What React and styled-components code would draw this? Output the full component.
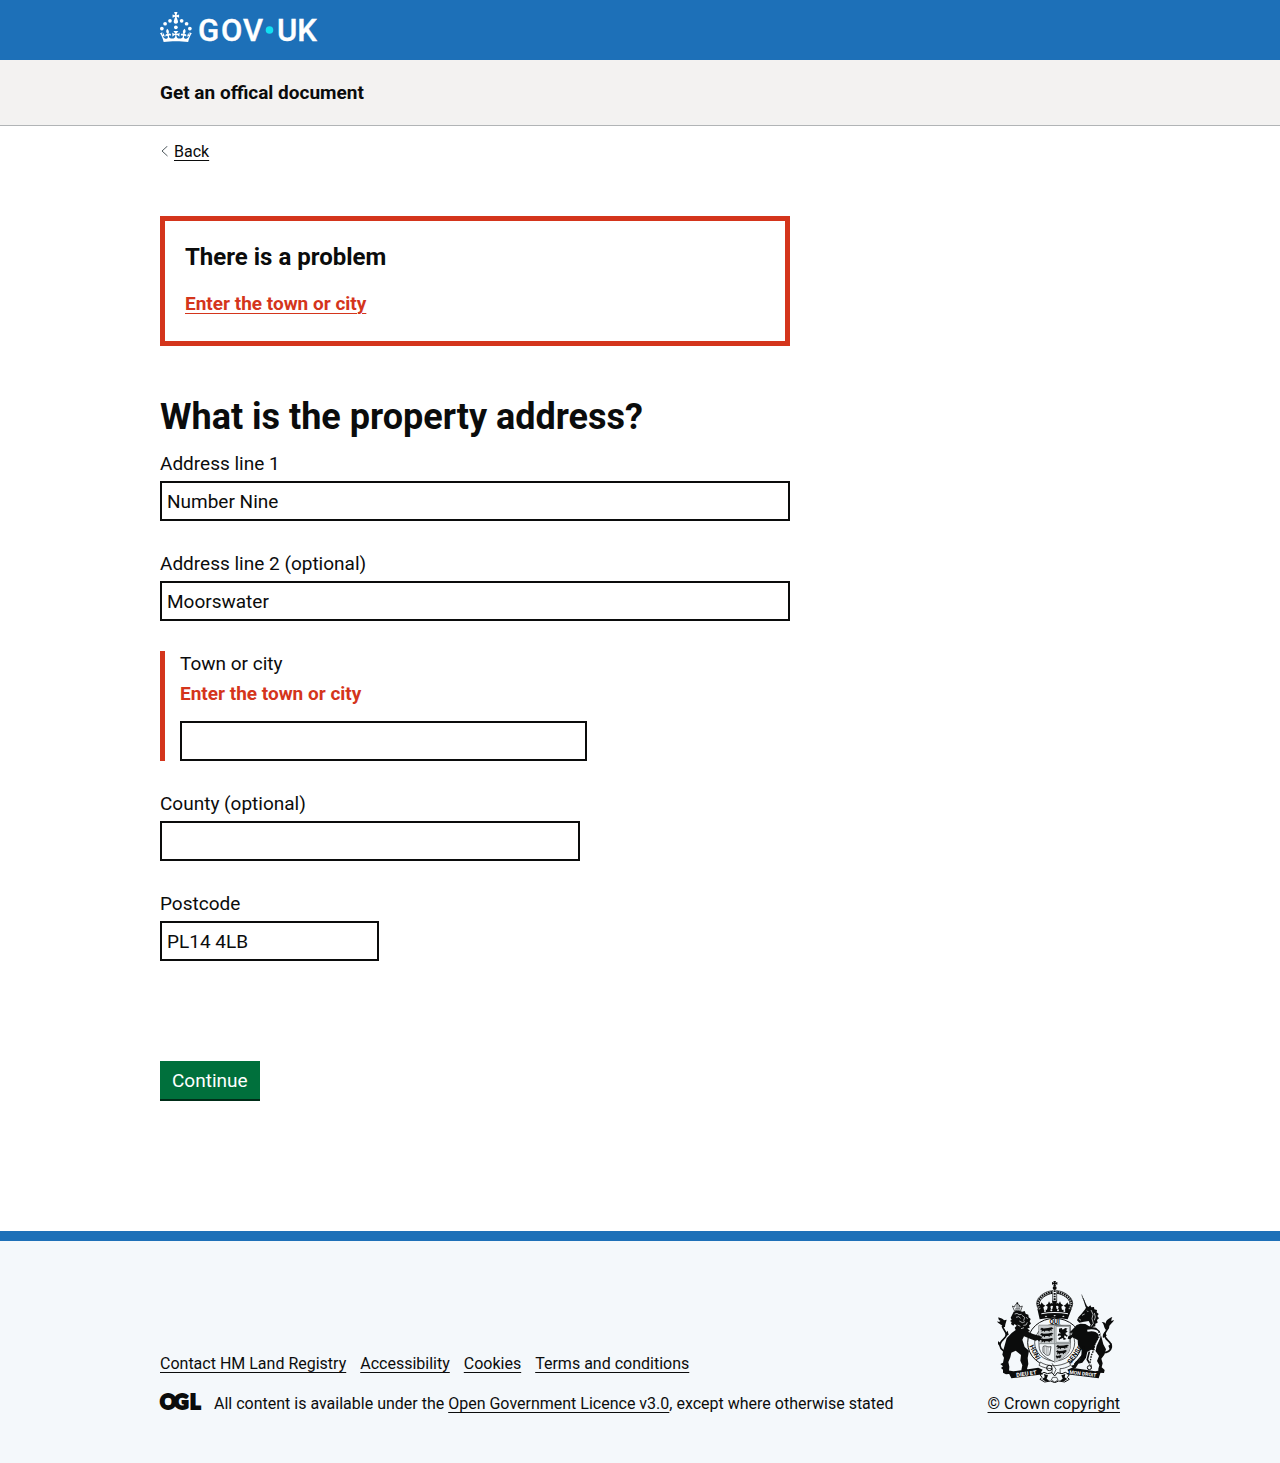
import React from "react";
import styled, { createGlobalStyle, css } from "styled-components";

const color = {
  text: "#0b0c0c",
  brand: "#1d70b8",
  accent: "#11e0f1",
  error: "#d4351c",
  button: "#00703c",
  buttonShadow: "#002d18",
  navigation: "#f3f2f1",
  border: "#b1b4b6",
  secondary: "#505a5f",
  footer: "#f4f8fb",
};

const GlobalStyle = createGlobalStyle`
  *, *::before, *::after { box-sizing: border-box; }
  body {
    margin: 0;
    background: ${color.footer};
    color: ${color.text};
    font-family: Roboto, "Liberation Sans", Arial, sans-serif;
    font-size: 19px;
    line-height: 25px;
  }
`;

const Page = styled.div`
  background: #fff;
`;

const Container = styled.div`
  max-width: 960px;
  margin: 0 auto;

  @media (max-width: 1020px) {
    margin: 0 30px;
  }
`;

const linkStyle = css`
  color: ${(p) => (p.$error ? color.error : color.text)};
  text-decoration: underline;
  text-decoration-thickness: 1px;
  text-underline-offset: 3px;
`;

const Link = styled.a`
  ${linkStyle}
  font-weight: ${(p) => (p.$error ? 700 : 400)};
`;

const Header = styled.header`
  background: ${color.brand};
  color: #fff;
  padding: 12px 0 18px;
`;

const HomeLink = styled.a`
  display: inline-block;
  vertical-align: top;
  height: 30px;
  color: #fff;
`;

const Logotype = styled.svg`
  display: block;
  fill: currentColor;
  overflow: visible;
`;

const LogoText = styled.text`
  font-family: Roboto, sans-serif;
  font-size: 31px;
  font-weight: 500;
  stroke: currentColor;
  stroke-width: 0.4;
`;

const ServiceNavigation = styled.section`
  background: ${color.navigation};
  border-bottom: 1px solid ${color.border};
  padding: 20px 0;
`;

const ServiceName = styled.a`
  display: block;
  color: ${color.text};
  font-weight: 700;
  text-decoration: none;
`;

const BackLink = styled.a`
  ${linkStyle}
  display: inline-flex;
  align-items: center;
  gap: 5px;
  margin-top: 16px;
  font-size: 16px;
  line-height: 20px;
  vertical-align: top;
`;

const Chevron = styled.svg`
  stroke: ${color.secondary};
  fill: none;
`;

const Main = styled.main`
  display: flex;
  flex-direction: column;
  align-items: flex-start;
  max-width: 630px;
  padding: 54px 0 130px;
`;

const ErrorSummary = styled.section`
  width: 100%;
  border: 5px solid ${color.error};
  padding: 20px 20px 25px;
  margin-bottom: 50px;
`;

const SummaryTitle = styled.h2`
  margin: 0 0 18px;
  font-size: 24px;
  line-height: 32px;
`;

const SummaryList = styled.ul`
  margin: 0;
  padding: 0;
  list-style: none;
`;

const Form = styled.form`
  width: 100%;
`;

const Fieldset = styled.fieldset`
  min-width: 0;
  margin: 0 0 100px;
  padding: 0;
  border: 0;
`;

const Legend = styled.legend`
  padding: 0;
  margin-bottom: 13px;
`;

const Title = styled.h1`
  margin: 0;
  font-size: 36px;
  line-height: 42px;
`;

const Fields = styled.div`
  display: flex;
  flex-direction: column;
  gap: 30px;
`;

const FormGroup = styled.div`
  ${(p) =>
    p.$error &&
    css`
      border-left: 5px solid ${color.error};
      padding-left: 15px;
    `}
`;

const Label = styled.label`
  display: block;
  margin-bottom: 5px;
`;

const ErrorMessage = styled.p`
  margin: 0 0 15px;
  color: ${color.error};
  font-weight: 700;
`;

const widths = { full: "100%", twoThirds: "calc(100% * 2 / 3)", short: "219px" };

const Input = styled.input`
  display: block;
  width: ${(p) => widths[p.$width]};
  max-width: 100%;
  height: 40px;
  padding: 5px;
  border: 2px solid ${color.text};
  border-radius: 0;
  background: #fff;
  color: ${color.text};
  font: inherit;
`;

const Button = styled.button`
  display: block;
  height: 38px;
  margin: 0 0 2px;
  padding: 0 12px;
  border: 0;
  background: ${color.button};
  box-shadow: 0 2px 0 ${color.buttonShadow};
  color: #fff;
  font: inherit;
  cursor: pointer;
`;

const Footer = styled.footer`
  border-top: 10px solid ${color.brand};
  background: ${color.footer};
  padding: 40px 0 49px;
  font-size: 16px;
  line-height: 20px;
`;

const FooterRow = styled.div`
  display: flex;
  flex-wrap: wrap;
  align-items: flex-end;
  justify-content: space-between;
  gap: 30px;
`;

const FooterLinks = styled.ul`
  display: flex;
  flex-wrap: wrap;
  gap: 14px;
  margin: 0 0 20px;
  padding: 0;
  list-style: none;
`;

const Licence = styled.div`
  display: flex;
  align-items: flex-start;
  gap: 12px;
`;

const LicenceLogo = styled.svg`
  flex: none;
  fill: ${color.text};
  overflow: visible;
`;

const LicenceText = styled.text`
  font-family: Lato, sans-serif;
  font-size: 20px;
  font-weight: 900;
  stroke: ${color.text};
  stroke-width: 2;
`;

const Copyright = styled.a`
  ${linkStyle}
  display: flex;
  flex-direction: column;
  align-items: center;
  gap: 11px;
`;

const ArmsText = styled.text`
  font-family: Roboto, sans-serif;
  font-size: ${(p) => p.$size}px;
  font-weight: 700;
  fill: ${(p) => (p.$light ? "#fff" : color.text)};
  text-anchor: middle;
`;

function GovLogo() {
  return (
    <Logotype width="162" height="30" viewBox="0 0 162 30" role="img" aria-label="GOV.UK">
      <g transform="scale(0.5)">
        <circle cx="20" cy="17.6" r="3.7" />
        <circle cx="10.2" cy="23.5" r="3.7" />
        <circle cx="3.7" cy="33.2" r="3.7" />
        <circle cx="31.7" cy="30.6" r="3.7" />
        <circle cx="43.3" cy="17.6" r="3.7" />
        <circle cx="53.2" cy="23.5" r="3.7" />
        <circle cx="59.7" cy="33.2" r="3.7" />
        <path d="M33.1,9.8c.2-.1.3-.3.5-.5l4.6,2.4v-6.8l-4.6,1.5c-.1-.2-.3-.3-.5-.5l1.9-5.9h-6.7l1.9,5.9c-.2.1-.3.3-.5.5l-4.6-1.5v6.8l4.6-2.4c.1.2.3.3.5.5l-2.6,8c-.9,2.8,1.2,5.7,4.1,5.7h0c3,0,5.1-2.9,4.1-5.7l-2.6-8ZM37,37.9s-3.4,3.8-4.1,6.1c2.2,0,4.2-.5,6.4-2.8l-.7,8.5c-2-2.8-4.4-4.1-5.7-3.8.1,3.1.5,6.7,5.8,7.2,3.7.3,6.7-1.5,7-3.8.4-2.6-2-4.3-3.7-1.6-1.4-4.5,2.4-6.1,4.9-3.2-1.9-4.5-1.8-7.7,2.4-10.9,3,4,2.6,7.3-1.2,11.1,2.4-1.3,6.2,0,4,4.6-1.2-2.8-3.7-2.2-4.2.2-.3,1.7.7,3.7,3,4.2,1.9.3,4.7-.9,7-5.9-1.3,0-2.4.7-3.9,1.7l2.4-8c.6,2.3,1.4,3.7,2.2,4.5.6-1.6.5-2.8,0-5.3l5,1.8c-2.6,3.6-5.2,8.7-7.3,17.5-7.4-1.1-15.7-1.7-24.5-1.7h0c-8.8,0-17.1.6-24.5,1.7-2.1-8.9-4.7-13.9-7.3-17.5l5-1.8c-.5,2.5-.6,3.7,0,5.3.8-.8,1.6-2.3,2.2-4.5l2.4,8c-1.5-1-2.6-1.7-3.9-1.7,2.3,5,5.2,6.2,7,5.9,2.3-.4,3.3-2.4,3-4.2-.5-2.4-3-3.1-4.2-.2-2.2-4.6,1.6-6,4-4.6-3.7-3.7-4.2-7.1-1.2-11.1,4.2,3.2,4.3,6.4,2.4,10.9,2.5-2.8,6.3-1.3,4.9,3.2-1.8-2.7-4.1-1-3.7,1.6.3,2.3,3.3,4.1,7,3.8,5.4-.5,5.7-4.2,5.8-7.2-1.3-.2-3.7,1-5.7,3.8l-.7-8.5c2.2,2.3,4.2,2.7,6.4,2.8-.7-2.3-4.1-6.1-4.1-6.1h10.6,0Z" />
      </g>
      <LogoText x="38 61 83" y="29">GOV</LogoText>
      <circle cx="109.5" cy="18" r="3.8" fill={color.accent} />
      <LogoText x="117" y="29">UK</LogoText>
    </Logotype>
  );
}

const lionPassant =
  "M0 5l4-4 4 2 10-1 8-2 4 3-5 3 2 3-5-1-1 4-3-3-6 0-2 4-2-4-5 3 1-5z";

function RoyalArms() {
  const ink = color.text;
  return (
    <svg width="126" height="102" viewBox="-1 9 378 306" fill={ink} stroke="none" aria-hidden="true">
      {/* crown */}
      <path d="M186 9h8l-2 5 6-2v8l-6-2 2 6h-8l2-6-6 2v-8l6 2z" />
      <circle cx="190" cy="30" r="6" />
      <g fill="none" stroke={ink}>
        <path d="M183 38C163 39 136 56 136 76c0 12 8 20 11 28M197 38c20 1 47 18 47 38 0 12-8 20-11 28" strokeWidth="2" />
        <path d="M183 46c-16 2-38 15-39 30 0 8 5 12 8 20M197 46c16 2 38 15 39 30 0 8-5 12-8 20" strokeWidth="3" />
        <path d="M182 42c-17 2-41 15-43 34 0 11 7 16 10 24M198 42c17 2 41 15 43 34 0 11-7 16-10 24" strokeWidth="6" strokeDasharray="5 2" />
        <path d="M184 36v48M196 36v48" strokeWidth="2" />
        <path d="M190 37v48" strokeWidth="6" strokeDasharray="5 3" />
      </g>
      <path d="M138 92l10 5-1-10-6-4 7-4 3-6 4 6 7 4-6 5 2 8 9-1 2-9-6-4 7-5 3-7 4 7 6 5-6 4 2 7h4l2-9-7-3v-7l7 3-3-9h15l-3 9 7-3v7l-7 3 2 9h4l2-7-6-4 6-5 4-7 3 7 7 5-6 4 2 9 9 1 2-8-6-5 7-4 4-6 3 6 7 4-6 4-1 10 10-5-12 32q-42-9-84 0z" />
      <g fill={color.footer}>
        <circle cx="161" cy="99" r="3" />
        <circle cx="180" cy="97" r="3" />
        <circle cx="200" cy="97" r="3" />
        <circle cx="219" cy="99" r="3" />
        <path d="M150 106q40-8 80 0v3q-40-8-80 0z" />
        <path d="M160 115l4-2 4 2-4 2zM186 113l4-2 4 2-4 2zM212 115l4-2 4 2-4 2z" />
      </g>

      {/* garter */}
      <g fill="none" stroke={ink}>
        <ellipse cx="190" cy="194" rx="81" ry="73" strokeWidth="3" />
        <ellipse cx="190" cy="194" rx="60" ry="55" strokeWidth="2" />
      </g>
      <ArmsText $size="19" x="190" y="138">QUI</ArmsText>
      <ArmsText $size="20" transform="translate(125 226) rotate(62)">HONI</ArmsText>
      <ArmsText $size="20" transform="translate(256 234) rotate(-54)">SENSE</ArmsText>

      {/* shield */}
      <path d="M143 142h94v60c0 28-24 40-47 50-23-10-47-22-47-50z" fill={color.footer} stroke={ink} strokeWidth="2" />
      <path d="M143 142h46v54h-46z" fill="#c5c9cb" />
      <path d="M191 196h46v6c0 28-24 40-46 50z" fill="#c5c9cb" />
      {[148, 164, 180].map((y) => (
        <path key={y} d={lionPassant} transform={`translate(146 ${y}) scale(1.35 1.1)`} />
      ))}
      <path d={lionPassant} transform="translate(194 200) scale(1.3 1.1)" />
      <path d={lionPassant} transform="translate(194 216) scale(1.1 1.1)" />
      <path d={lionPassant} transform="translate(193 231) scale(.6 .9)" />
      <g fill="none" stroke="#8d9294" strokeWidth="3">
        <rect x="194" y="145" width="40" height="48" />
        <path d="M190 142v108M143 197h94" />
      </g>
      <path d="M203 152l8-2 3 5 8-5 7 2-5 4 5 5-7 4 3 5 4 1-2 6-7-5-2 6 7 5-8 3-2-6-8 3-4 4-2-6 8-5-2-4-8 2 2-7 8-1-6-4z" />
      <g fill="none" stroke={ink} strokeWidth="2">
        <path d="M155 206c8-6 12 3 24 0l-4 24c-7 5-13 0-20-8z" />
        <path d="M160 206v20M165 206v22M170 207v23" strokeWidth="1" />
      </g>

      {/* buckle, strap and compartment */}
      <path d="M147 252c20 14 55 16 86-1l5 11c-14 8-24 10-32 10l1 18-14 9-12-9 2-18c-14 0-30-4-40-10z" fill={color.footer} stroke={ink} strokeWidth="2" />
      <circle cx="174" cy="270" r="8" fill="none" stroke={ink} strokeWidth="3" />
      <path d="M182 256l12 18M194 274l-6 14" fill="none" stroke={ink} strokeWidth="2" />
      <g fill={color.footer} stroke={ink} strokeWidth="3">
        <path d="M146 290l12-7 10 4 14-3 8 10 8-10 14 3 10-4 12 7-6 8 6 6-14 8-18-3-12 5-12-5-18 3-14-8 6-6z" />
      </g>
      <path d="M158 288l12 4-4 10 8 6-12 2-10-7 8-5zM222 288l-12 4 4 10-8 6 12 2 10-7-8-5z" />
      <path d="M184 298h12l4 8-10 6-10-6z" fill={color.footer} stroke={ink} strokeWidth="2" />

      {/* lion */}
      <g>
        <path d="M69 98l-6-14 7 3 1-6 6-4 7 4 2 6 7-3-5 15q-9-3-19-1z" fill={color.footer} stroke={ink} strokeWidth="2" />
        <path d="M71 93h16M77 80v12M83 81v11" stroke={ink} strokeWidth="2" />
        <circle cx="78" cy="76" r="3" />
        <path d="M67 101c8-4 17-3 26 0l7-2 3 8 8 3 1 8 6 5-3 7 4 7-6 5 2 8-7 1 8 8-6 2 15 7 13 4 8 1 7 6-5 2 6 6-8-1-2 5-5-5-7 2-14-5-20-8-5 10 7 22 13 11-4 22 2 18-4 15 7 9-19 1-5-6 3-15-6-14 2-17-16-13-13 6-3 14-6 14 3 14-1 14 8 7-17 2-9-5 0-9-6-5 6-5-8-7 8-4 3-15-5-9 3-13 5-18 5-18 15-16 12-9-3-7 6-6-6-5-4 5-7-5 2-6-5-3 5-4-3-6z" />
        <path d="M70 108l7-2 6 4 8-1M74 118l8-2 6 5M92 112l8 6-3 10M84 129l9 5 8-3M96 142l8-1 4-8M79 141l8 4M104 118l5 4M89 152l9-3" fill="none" stroke={color.footer} strokeWidth="2" />
        <path d="M56 222c-15 2-28-5-30-19-2-16 19-20 19-33 0-9-10-15-12-26" fill="none" stroke={ink} strokeWidth="5" />
        <path d="M35 148c-3-10-14-9-18-18 7 3 9 1 10-2-5-1-6-5-6-10 8 4 14 4 17 9l8-2c-2 8-5 14-5 22zM26 204c-7-3-7-9-5-15 3 5 6 5 9 6zM44 175c-2-7-1-12 5-17l3 12z" />
      </g>

      {/* unicorn */}
      <g>
        <path d="M271 50l17 36-5 2z" />
        <path d="M271 50l5 14M276 62l4 8" stroke={ink} strokeWidth="2" strokeDasharray="3 2" />
        <path d="M282 93l4-10 5 4 6-5 3 6 8-1 1 7 8 2-1 7 6 5-4 6 5 7-6 5 2 8-7 3 0 8-8 2-4 8-12 1 10-16-6-11-14 2-14 3-7-7 4-9 9-10z" />
        <path d="M262 122l7 5M272 112l8-4M287 98l4 4M299 96l6 13-3 13 4 14-7 10M309 105l3 12-3 10" fill="none" stroke={color.footer} strokeWidth="2" />
        <path d="M247 151l9-10 11-4 15 1 14 8 18 3 11 10 6 20 5 20 8 15-5 16-9 12 4 14-3 12 9 8-2 9-17-1 0-12 3-10-7-13 6-15-10-14-13-5-12 6-4 18-11 15-12 3-8 13-8 1-6-8 8-2 7-11 11-4 5-13 1-17-11-15-1-15-16-8-6 6-8-2 2-7 9-4 4-7-10 0z" />
        <path d="M277 206l-3 25-24 28M294 221l-6 24 10 16 1 11" fill="none" stroke={ink} strokeWidth="5" />
        <path d="M288 158c21-4 35 2 37 14 1 15-15 24-14 42l-9 20-6 28" fill="none" stroke={color.footer} strokeWidth="6" />
        <path d="M322 160c2 6 3 13 0 18-7 10-14 21-13 34l-9 20-5 28" fill="none" stroke={ink} strokeWidth="4" strokeDasharray="5 3" />
        <circle cx="294" cy="269" r="6" fill={color.footer} stroke={ink} strokeWidth="3" />
        <path d="M334 224c13 0 24-6 26-17 2-17-20-20-20-36 0-10 10-16 12-26" fill="none" stroke={ink} strokeWidth="5" />
        <path d="M344 156c-7-7-5-18-13-24 7-1 9 2 12 5 0-9 8-16 20-20-3 6-3 9-3 12l8-3c-3 9-14 12-17 26zM356 216c7-7 6-15 4-21-3 5-6 7-9 8zM335 180c-2-8 0-14 6-19l5 12z" />
      </g>

      {/* motto scroll */}
      <path d="M48 277l18 3 75-11 13 6-5 8 7 6-96 12z" />
      <path d="M330 277l-18 3-70-11-14 6 5 8-7 6 96 12z" />
      <ArmsText $size="17" $light transform="translate(106 293) rotate(-7)">DIEU ET</ArmsText>
      <ArmsText $size="15" $light transform="translate(274 292) rotate(7)">MON DROIT</ArmsText>
    </svg>
  );
}

function Field({ id, label, error, width, ...input }) {
  return (
    <FormGroup $error={Boolean(error)}>
      <Label htmlFor={id}>{label}</Label>
      {error && <ErrorMessage id={`${id}-error`}>{error}</ErrorMessage>}
      <Input
        id={id}
        name={id}
        type="text"
        $width={width}
        aria-describedby={error ? `${id}-error` : undefined}
        {...input}
      />
    </FormGroup>
  );
}

const footerLinks = ["Contact HM Land Registry", "Accessibility", "Cookies", "Terms and conditions"];

export default function App() {
  return (
    <>
      <GlobalStyle />
      <Page>
        <Header>
          <Container>
            <HomeLink href="#">
              <GovLogo />
            </HomeLink>
          </Container>
        </Header>
        <ServiceNavigation>
          <Container>
            <ServiceName href="#">Get an offical document</ServiceName>
          </Container>
        </ServiceNavigation>
        <Container>
          <BackLink href="#">
            <Chevron width="9" height="12" viewBox="0 0 9 12" aria-hidden="true">
              <path d="M7.5 0L2 5l5.5 5" />
            </Chevron>
            Back
          </BackLink>
          <Main>
            <ErrorSummary aria-labelledby="error-summary-title">
              <SummaryTitle id="error-summary-title">There is a problem</SummaryTitle>
              <SummaryList>
                <li>
                  <Link href="#town" $error>
                    Enter the town or city
                  </Link>
                </li>
              </SummaryList>
            </ErrorSummary>
            <Form onSubmit={(e) => e.preventDefault()} noValidate>
              <Fieldset>
                <Legend>
                  <Title>What is the property address?</Title>
                </Legend>
                <Fields>
                  <Field id="line1" label="Address line 1" width="full" defaultValue="Number Nine" />
                  <Field id="line2" label="Address line 2 (optional)" width="full" defaultValue="Moorswater" />
                  <Field id="town" label="Town or city" width="twoThirds" error="Enter the town or city" />
                  <Field id="county" label="County (optional)" width="twoThirds" />
                  <Field id="postcode" label="Postcode" width="short" defaultValue="PL14 4LB" />
                </Fields>
              </Fieldset>
              <Button type="submit">Continue</Button>
            </Form>
          </Main>
        </Container>
        <Footer>
          <Container>
            <FooterRow>
              <div>
                <FooterLinks>
                  {footerLinks.map((text) => (
                    <li key={text}>
                      <Link href="#">{text}</Link>
                    </li>
                  ))}
                </FooterLinks>
                <Licence>
                  <LicenceLogo width="42" height="20" viewBox="0 0 42 20" role="img" aria-label="OGL">
                    <LicenceText x="0 14 30" y="15">OGL</LicenceText>
                  </LicenceLogo>
                  <span>
                    All content is available under the <Link href="#">Open Government Licence v3.0</Link>, except
                    where otherwise stated
                  </span>
                </Licence>
              </div>
              <Copyright href="#">
                <RoyalArms />
                <span>© Crown copyright</span>
              </Copyright>
            </FooterRow>
          </Container>
        </Footer>
      </Page>
    </>
  );
}
